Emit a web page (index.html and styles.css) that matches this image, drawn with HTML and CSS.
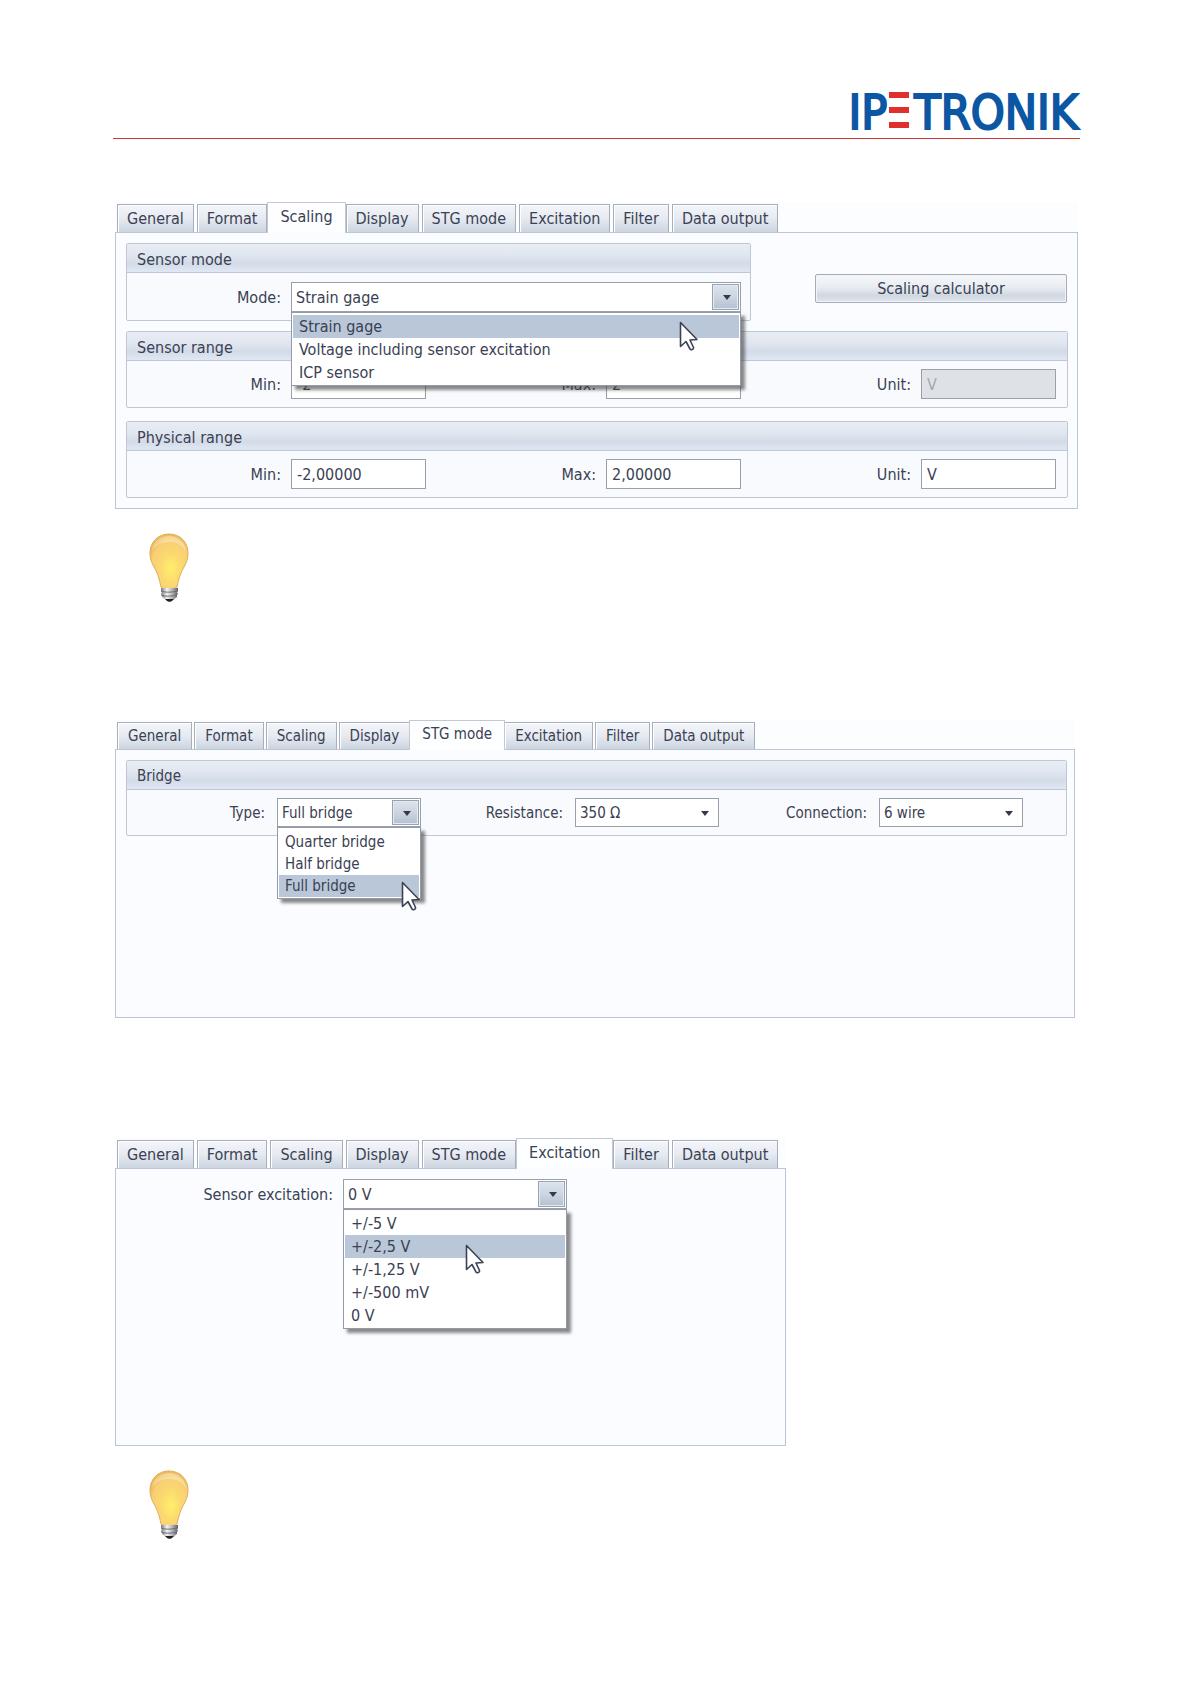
FILE: index.html
```html
<!DOCTYPE html>
<html lang="en">
<head>
    <meta charset="UTF-8">
    <meta name="viewport" content="width=device-width, initial-scale=1.0">
    <title>IPETRONIK - Channel settings</title>
    <link rel="stylesheet" href="styles.css">
</head>
<body>
    <!-- shared drawings -->
    <svg class="defs" width="0" height="0" aria-hidden="true">
        <defs>
            <radialGradient id="glass" cx="0.55" cy="0.62" r="0.6">
                <stop offset="0" stop-color="#fff06a"/>
                <stop offset="0.45" stop-color="#fbd970"/>
                <stop offset="0.85" stop-color="#f8cf74"/>
                <stop offset="1" stop-color="#eebb58"/>
            </radialGradient>
            <linearGradient id="metal" x1="0" y1="0" x2="1" y2="0">
                <stop offset="0" stop-color="#77797c"/>
                <stop offset="0.35" stop-color="#f2f3f4"/>
                <stop offset="0.65" stop-color="#b4b6b9"/>
                <stop offset="1" stop-color="#5e6063"/>
            </linearGradient>
            <symbol id="bulb" viewBox="0 0 40 70">
                <path d="M20 1C9 1 1 9 1 20c0 9 4 13 7 20 2 5 3 9 4 14 4 3 12 3 16 0 1-5 2-9 4-14 3-7 7-11 7-20C39 9 31 1 20 1z" fill="url(#glass)" stroke="#dfae5c"/>
                <path d="M20 3C11 3 4 9 3 18c4-6 9-9 17-9s13 3 17 9C36 9 29 3 20 3z" fill="#fff" opacity="0.3"/>
                <path d="M12 55h17v3l-1 1 1 2-1 1 0 2-4 3h-7l-4-3v-2l-1-1 1-2-1-1z" fill="url(#metal)"/>
                <path d="M12 58c5 2 12 1 17 0M12 62c5 2 12 1 16 0" fill="none" stroke="#6b6d70"/>
                <path d="M16 66h9l-2 2c-1 1-4 1-5 0z" fill="#222"/>
            </symbol>
            <symbol id="cursor" viewBox="0 0 20 30">
                <path d="M1.500 1.500v24l5.500-5 4 7.500c1 1.500 4 .5 3.500-1.500L11 19l7-.5z" fill="#fff" stroke="#3b4254" stroke-width="1.600" stroke-linejoin="round"/>
            </symbol>
        </defs>
    </svg>

    <div class="page">
        <header>
            <div class="logo" role="img" aria-label="IPETRONIK">
                <span>IP</span>
                <svg class="logo-bars" viewBox="0 0 20 36" aria-hidden="true">
                    <path d="M0 0h20v6H0zM0 15h20v6H0zM0 30h20v6H0z" fill="#e0302d"/>
                </svg>
                <span>TRONIK</span>
            </div>
        </header>

        <section class="dialog scaling">
            <div class="tabs" role="tablist">
                <button class="tab" role="tab">General</button>
                <button class="tab" role="tab">Format</button>
                <button class="tab active" role="tab" aria-selected="true">Scaling</button>
                <button class="tab" role="tab">Display</button>
                <button class="tab" role="tab">STG mode</button>
                <button class="tab" role="tab">Excitation</button>
                <button class="tab" role="tab">Filter</button>
                <button class="tab" role="tab">Data output</button>
            </div>
            <div class="panel" role="tabpanel">
                <div class="top-row">
                    <div class="group">
                        <h2>Sensor mode</h2>
                        <div class="mode-row">
                            <label for="mode">Mode:</label>
                            <div class="combo open">
                                <select id="mode">
                                    <option>Strain gage</option>
                                    <option>Voltage including sensor excitation</option>
                                    <option>ICP sensor</option>
                                </select>
                                <ul class="list">
                                    <li class="selected">Strain gage</li>
                                    <li>Voltage including sensor excitation</li>
                                    <li>ICP sensor</li>
                                </ul>
                                <svg class="cursor cursor-mode"><use href="#cursor"/></svg>
                            </div>
                        </div>
                    </div>
                    <button class="calculator">Scaling calculator</button>
                </div>
                <div class="group">
                    <h2>Sensor range</h2>
                    <div class="fields">
                        <div class="field">
                            <label for="sensorMin">Min:</label>
                            <input type="text" id="sensorMin" value="-2">
                        </div>
                        <div class="field">
                            <label for="sensorMax">Max:</label>
                            <input type="text" id="sensorMax" value="2">
                        </div>
                        <div class="field">
                            <label for="sensorUnit">Unit:</label>
                            <input type="text" id="sensorUnit" value="V" disabled>
                        </div>
                    </div>
                </div>
                <div class="group">
                    <h2>Physical range</h2>
                    <div class="fields">
                        <div class="field">
                            <label for="physicalMin">Min:</label>
                            <input type="text" id="physicalMin" value="-2,00000">
                        </div>
                        <div class="field">
                            <label for="physicalMax">Max:</label>
                            <input type="text" id="physicalMax" value="2,00000">
                        </div>
                        <div class="field">
                            <label for="physicalUnit">Unit:</label>
                            <input type="text" id="physicalUnit" value="V">
                        </div>
                    </div>
                </div>
            </div>
        </section>

        <div class="tip"><svg class="bulb"><use href="#bulb"/></svg></div>

        <section class="dialog bridge">
            <div class="tabs" role="tablist">
                <button class="tab" role="tab">General</button>
                <button class="tab" role="tab">Format</button>
                <button class="tab" role="tab">Scaling</button>
                <button class="tab" role="tab">Display</button>
                <button class="tab active" role="tab" aria-selected="true">STG mode</button>
                <button class="tab" role="tab">Excitation</button>
                <button class="tab" role="tab">Filter</button>
                <button class="tab" role="tab">Data output</button>
            </div>
            <div class="panel" role="tabpanel">
                <div class="group">
                    <h2>Bridge</h2>
                    <div class="fields">
                        <div class="field">
                            <label for="type">Type:</label>
                            <div class="combo open">
                                <select id="type">
                                    <option>Quarter bridge</option>
                                    <option>Half bridge</option>
                                    <option selected>Full bridge</option>
                                </select>
                                <ul class="list">
                                    <li>Quarter bridge</li>
                                    <li>Half bridge</li>
                                    <li class="selected">Full bridge</li>
                                </ul>
                                <svg class="cursor cursor-type"><use href="#cursor"/></svg>
                            </div>
                        </div>
                        <div class="field">
                            <label for="resistance">Resistance:</label>
                            <div class="combo">
                                <select id="resistance">
                                    <option>350 Ω</option>
                                </select>
                            </div>
                        </div>
                        <div class="field">
                            <label for="connection">Connection:</label>
                            <div class="combo">
                                <select id="connection">
                                    <option>6 wire</option>
                                </select>
                            </div>
                        </div>
                    </div>
                </div>
            </div>
        </section>

        <section class="dialog excitation">
            <div class="tabs" role="tablist">
                <button class="tab" role="tab">General</button>
                <button class="tab" role="tab">Format</button>
                <button class="tab" role="tab">Scaling</button>
                <button class="tab" role="tab">Display</button>
                <button class="tab" role="tab">STG mode</button>
                <button class="tab active" role="tab" aria-selected="true">Excitation</button>
                <button class="tab" role="tab">Filter</button>
                <button class="tab" role="tab">Data output</button>
            </div>
            <div class="panel" role="tabpanel">
                <div class="excitation-row">
                    <label for="excitation">Sensor excitation:</label>
                    <div class="combo open">
                        <select id="excitation">
                            <option>+/-5 V</option>
                            <option>+/-2,5 V</option>
                            <option>+/-1,25 V</option>
                            <option>+/-500 mV</option>
                            <option selected>0 V</option>
                        </select>
                        <ul class="list">
                            <li>+/-5 V</li>
                            <li class="selected">+/-2,5 V</li>
                            <li>+/-1,25 V</li>
                            <li>+/-500 mV</li>
                            <li>0 V</li>
                        </ul>
                        <svg class="cursor cursor-excitation"><use href="#cursor"/></svg>
                    </div>
                </div>
            </div>
        </section>

        <div class="tip"><svg class="bulb"><use href="#bulb"/></svg></div>
    </div>
</body>
</html>
```
FILE: styles.css
```css
* {
    box-sizing: border-box;
}
body {
    margin: 0;
    background-color: white;
    color: #3a4153;
    font-family: 'DejaVu Sans Condensed', 'DejaVu Sans', sans-serif;
    font-size: 16px;
}
button, input, select {
    font: inherit;
    color: inherit;
    margin: 0;
}
.defs {
    position: absolute;
}
.page {
    padding: 82px 111px 80px 113px;
}

/* header */
header {
    display: flex;
    justify-content: flex-end;
    height: 57px;
    padding-right: 2px;
    border-bottom: 1px solid #c4383a;
}
.logo {
    display: flex;
    align-items: flex-start;
    color: #0b57a4;
    font-size: 48px;
    line-height: 60px;
    -webkit-text-stroke: 2px #0b57a4;
}
.logo-bars {
    width: 20px;
    height: 36px;
    margin: 10px 5px 0 2px;
}

/* dialogs */
.dialog {
    margin: 63px 2px 0;
    background-color: #fcfdff;
}
.tabs {
    display: flex;
    align-items: flex-end;
    gap: 3px;
    height: 30px;
    padding-left: 2px;
}
.tab {
    height: 28px;
    padding: 0 9px;
    border: 1px solid #a9aebc;
    border-bottom: none;
    background: linear-gradient(#f3f5f9, #e6eaf1 50%, #ccd5e0);
    box-shadow: inset 1px 1px #fff;
    line-height: 26px;
    white-space: nowrap;
}
.tab.active {
    position: relative;
    height: 31px;
    margin: 0 -3px -1px;
    padding: 0 12px 3px;
    background: #fdfeff;
    border-color: #c3c8d4;
}
.panel {
    border: 1px solid #bcc5d4;
    background-color: #fafcff;
    padding: 10px 9px 10px 10px;
}
.group {
    border: 1px solid #c0c7d4;
    border-radius: 2px;
    background-color: #f9fafd;
}
.group h2 {
    height: 29px;
    margin: 0;
    padding-left: 10px;
    border-bottom: 1px solid #bfc7d6;
    background: linear-gradient(#e9edf5, #dfe5ef 45%, #d3dbe7 70%, #dfe8f4);
    font-size: 16px;
    font-weight: normal;
    line-height: 31px;
}
.group + .group {
    margin-top: 13px;
}
.top-row {
    display: flex;
    align-items: flex-start;
    margin-bottom: 10px;
}
.top-row .group {
    flex: 1;
}
.calculator {
    width: 252px;
    height: 29px;
    margin: 31px 1px 0 64px;
    padding: 0;
    border: 1px solid #a6acb9;
    border-radius: 2px;
    background: linear-gradient(#f5f7fa, #e9edf2 45%, #d0d8e1 75%, #dfe5ec);
    box-shadow: inset 0 0 0 1px #f2f5f8;
}
.mode-row {
    display: grid;
    grid-template-columns: 154px 1fr;
    gap: 10px;
    align-items: center;
    padding: 9px 9px 8px 0;
}
.mode-row label {
    text-align: right;
}
.fields {
    display: grid;
    grid-template-columns: 299fr 315fr 315fr;
    padding: 8px 11px 8px 0;
}
.field {
    display: flex;
    align-items: center;
    justify-content: flex-end;
    gap: 10px;
}
input {
    width: 135px;
    height: 30px;
    padding: 0 5px;
    border: 1px solid #9a9fac;
    background-color: white;
}
input:disabled {
    background-color: #dee2e6;
    color: #a5a8ae;
}

/* drop-downs */
.combo {
    position: relative;
    height: 30px;
}
.combo select {
    display: block;
    width: 100%;
    height: 100%;
    padding: 0 28px 0 4px;
    border: 1px solid #9a9fac;
    border-radius: 0;
    background-color: white;
    appearance: none;
}
.combo::before {
    content: "";
    position: absolute;
    top: 2px;
    right: 2px;
    bottom: 2px;
    width: 25px;
    pointer-events: none;
}
.combo::after {
    content: "";
    position: absolute;
    top: 50%;
    right: 10px;
    margin-top: -2px;
    border: 4px solid transparent;
    border-top: 5px solid #333a49;
    border-bottom: none;
    pointer-events: none;
}
.combo.open::before {
    border: 1px solid #98a2b3;
    background: linear-gradient(#dce3ec, #ccd5e1 50%, #b5c1d1);
    box-shadow: inset 0 0 0 1px #e4eaf1;
}
.list {
    position: absolute;
    z-index: 2;
    top: 100%;
    left: 0;
    right: 0;
    margin: 0;
    padding: 2px 1px 1px;
    border: 1px solid #949aa6;
    background-color: white;
    box-shadow: 4px 4px 3px rgba(60, 60, 60, 0.6);
    list-style: none;
    line-height: 23px;
}
.list li {
    padding-left: 6px;
}
.list .selected {
    background-color: #b9c7d9;
}
.cursor {
    position: absolute;
    z-index: 3;
    width: 20px;
    height: 30px;
}
.cursor-mode {
    top: 39px;
    right: 42px;
}
.cursor-type {
    top: 83px;
    right: 0;
}
.cursor-excitation {
    top: 65px;
    right: 82px;
}

/* tips */
.tip {
    margin: 24px 0 0 36px;
}
.bulb {
    display: block;
    width: 40px;
    height: 70px;
}

/* strain gage bridge */
.bridge {
    margin: 116px 5px 0 2px;
    font-size: 15px;
}
.bridge .tabs {
    gap: 2px;
}
.bridge .tab {
    height: 27px;
    padding: 0 10px;
}
.bridge .tab.active {
    height: 30px;
    padding: 0 12px 3px;
}
.bridge .panel {
    min-height: 269px;
    padding-right: 7px;
}
.bridge .group h2 {
    font-size: 15px;
}
.bridge .fields {
    grid-template-columns: 294fr 298fr 304fr;
    padding-right: 43px;
}
.bridge .field {
    gap: 12px;
}
.bridge .combo {
    width: 144px;
    height: 29px;
}
.bridge .list {
    padding-top: 3px;
    line-height: 22px;
}

/* sensor excitation */
.excitation {
    max-width: 671px;
    margin-top: 120px;
}
.excitation .panel {
    min-height: 278px;
}
.excitation-row {
    display: flex;
    align-items: center;
    gap: 10px;
    padding-right: 209px;
}
.excitation-row label {
    flex: 1;
    text-align: right;
}
.excitation-row .combo {
    width: 224px;
}
```
